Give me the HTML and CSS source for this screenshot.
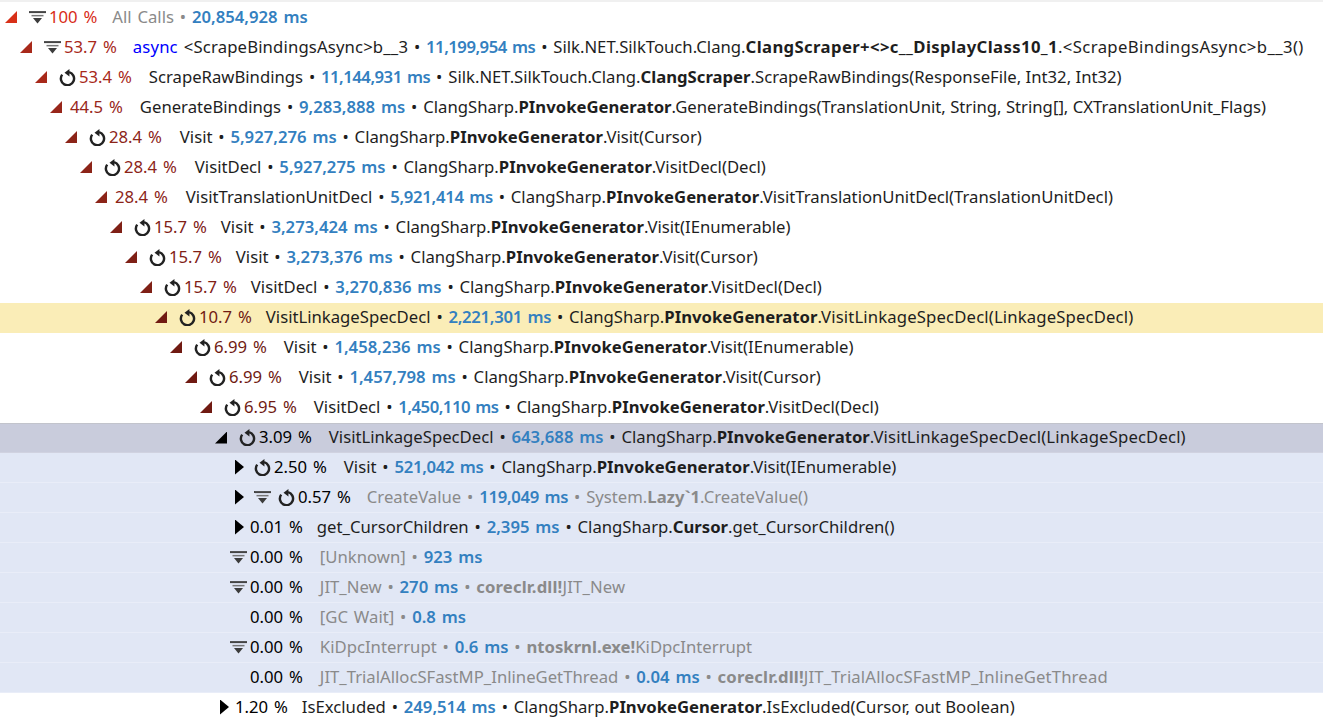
FILE: index.html
```html
<!DOCTYPE html>
<html lang="en">
<head>
<meta charset="utf-8">
<title>Call Tree</title>
<link rel="stylesheet" href="styles.css">
</head>
<body>
<svg class="defs" width="0" height="0">
<symbol id="filter" viewBox="0 0 17 14"><path d="M0 .6h17v2H0z" fill="#444"/><path d="M2.5 4.4h12v1.5h-12z" fill="#777"/><path d="M4 7.6h9L8.5 13z" fill="#3c3c3c"/></symbol>
<symbol id="rec" viewBox="0 0 16 16"><path d="M9.5 3A6.2 6.2 0 1 1 3 5.3" fill="none" stroke="#222" stroke-width="2.3"/><path d="M9.8 0v7L5.2 3.5z" fill="#222"/></symbol>
</svg>
<main class="tree">
<div class="row"><span class="cell l0"><span class="slot"><i class="tri open c100"></i></span><svg class="ic"><use href="#filter"/></svg><span class="pct g15 p100">100 %</span><span class="dim name">All Calls</span><span class="dim"> • </span><b class="ms">20,854,928 ms</b></span></div>
<div class="row"><span class="cell l1"><span class="slot"><i class="tri open c53"></i></span><svg class="ic"><use href="#filter"/></svg><span class="pct g16 p53">53.7 %</span><span class="name wide"><span class="kw">async</span> &lt;ScrapeBindingsAsync&gt;b__3</span> • <b class="ms ms2">11,199,954 ms</b> • <span class="sig">Silk.NET.SilkTouch.Clang.<span class="wider"><b>ClangScraper+&lt;&gt;c__DisplayClass10_1</b>.&lt;ScrapeBindingsAsync&gt;b__3()</span></span></span></div>
<div class="row"><span class="cell l2"><span class="slot"><i class="tri open c53"></i></span><svg class="ic"><use href="#rec"/></svg><span class="pct p53">53.4 %</span><span class="name">ScrapeRawBindings</span> • <b class="ms ms2">11,144,931 ms</b> • <span class="sig">Silk.NET.SilkTouch.Clang.<b>ClangScraper</b>.ScrapeRawBindings(ResponseFile, Int32, Int32)</span></span></div>
<div class="row"><span class="cell l3"><span class="slot"><i class="tri open c44"></i></span><span class="pct p44">44.5 %</span><span class="name">GenerateBindings</span> • <b class="ms">9,283,888 ms</b> • <span class="sig">ClangSharp.<b>PInvokeGenerator</b>.GenerateBindings(TranslationUnit, String, String[], CXTranslationUnit_Flags)</span></span></div>
<div class="row"><span class="cell l4"><span class="slot"><i class="tri open c28"></i></span><svg class="ic"><use href="#rec"/></svg><span class="pct g18 p28">28.4 %</span><span class="name">Visit</span> • <b class="ms">5,927,276 ms</b> • <span class="sig">ClangSharp.<b>PInvokeGenerator</b>.Visit(Cursor)</span></span></div>
<div class="row"><span class="cell l5"><span class="slot"><i class="tri open c28"></i></span><svg class="ic"><use href="#rec"/></svg><span class="pct g18 p28">28.4 %</span><span class="name">VisitDecl</span> • <b class="ms">5,927,275 ms</b> • <span class="sig">ClangSharp.<b>PInvokeGenerator</b>.VisitDecl(Decl)</span></span></div>
<div class="row"><span class="cell l6"><span class="slot"><i class="tri open c28"></i></span><span class="pct g18 p28">28.4 %</span><span class="name">VisitTranslationUnitDecl</span> • <b class="ms ms1">5,921,414 ms</b> • <span class="sig">ClangSharp.<b>PInvokeGenerator</b>.VisitTranslationUnitDecl(TranslationUnitDecl)</span></span></div>
<div class="row"><span class="cell l7"><span class="slot"><i class="tri open c15"></i></span><svg class="ic"><use href="#rec"/></svg><span class="pct g14 p15">15.7 %</span><span class="name">Visit</span> • <b class="ms">3,273,424 ms</b> • <span class="sig">ClangSharp.<b>PInvokeGenerator</b>.Visit(IEnumerable)</span></span></div>
<div class="row"><span class="cell l8"><span class="slot"><i class="tri open c15"></i></span><svg class="ic"><use href="#rec"/></svg><span class="pct g14 p15">15.7 %</span><span class="name">Visit</span> • <b class="ms">3,273,376 ms</b> • <span class="sig">ClangSharp.<b>PInvokeGenerator</b>.Visit(Cursor)</span></span></div>
<div class="row"><span class="cell l9"><span class="slot"><i class="tri open c15"></i></span><svg class="ic"><use href="#rec"/></svg><span class="pct g14 p15">15.7 %</span><span class="name">VisitDecl</span> • <b class="ms">3,270,836 ms</b> • <span class="sig">ClangSharp.<b>PInvokeGenerator</b>.VisitDecl(Decl)</span></span></div>
<div class="row hot"><span class="cell l10"><span class="slot"><i class="tri open c10"></i></span><svg class="ic"><use href="#rec"/></svg><span class="pct g14 p10">10.7 %</span><span class="name">VisitLinkageSpecDecl</span> • <b class="ms ms1">2,221,301 ms</b> • <span class="sig">ClangSharp.<b>PInvokeGenerator</b><span class="wide">.VisitLinkageSpecDecl(LinkageSpecDecl)</span></span></span></div>
<div class="row"><span class="cell l11"><span class="slot"><i class="tri open c10"></i></span><svg class="ic"><use href="#rec"/></svg><span class="pct p10">6.99 %</span><span class="name">Visit</span> • <b class="ms">1,458,236 ms</b> • <span class="sig">ClangSharp.<b>PInvokeGenerator</b>.Visit(IEnumerable)</span></span></div>
<div class="row"><span class="cell l12"><span class="slot"><i class="tri open c10"></i></span><svg class="ic"><use href="#rec"/></svg><span class="pct p10">6.99 %</span><span class="name">Visit</span> • <b class="ms">1,457,798 ms</b> • <span class="sig">ClangSharp.<b>PInvokeGenerator</b>.Visit(Cursor)</span></span></div>
<div class="row"><span class="cell l13"><span class="slot"><i class="tri open c10"></i></span><svg class="ic"><use href="#rec"/></svg><span class="pct p10">6.95 %</span><span class="name">VisitDecl</span> • <b class="ms ms2">1,450,110 ms</b> • <span class="sig">ClangSharp.<b>PInvokeGenerator</b>.VisitDecl(Decl)</span></span></div>
<div class="row sel"><span class="cell l14"><span class="slot"><i class="tri open c0"></i></span><svg class="ic"><use href="#rec"/></svg><span class="pct">3.09 %</span><span class="name">VisitLinkageSpecDecl</span> • <b class="ms">643,688 ms</b> • <span class="sig">ClangSharp.<b>PInvokeGenerator</b><span class="wide">.VisitLinkageSpecDecl(LinkageSpecDecl)</span></span></span></div>
<div class="row child"><span class="cell l15"><span class="slot"><i class="tri closed"></i></span><svg class="ic"><use href="#rec"/></svg><span class="pct">2.50 %</span><span class="name">Visit</span> • <b class="ms ms1">521,042 ms</b> • <span class="sig">ClangSharp.<b>PInvokeGenerator</b>.Visit(IEnumerable)</span></span></div>
<div class="row child"><span class="cell l15"><span class="slot"><i class="tri closed"></i></span><svg class="ic"><use href="#filter"/></svg><svg class="ic"><use href="#rec"/></svg><span class="pct g16">0.57 %</span><span class="dim name">CreateValue</span><span class="dim"> • </span><b class="ms ms1">119,049 ms</b><span class="dim"> • <span class="sig">System.<b>Lazy`1</b>.CreateValue()</span></span></span></div>
<div class="row child"><span class="cell l15"><span class="slot"><i class="tri closed"></i></span><span class="pct g14">0.01 %</span><span class="name">get_CursorChildren</span> • <b class="ms">2,395 ms</b> • <span class="sig">ClangSharp.<b>Cursor</b>.get_CursorChildren()</span></span></div>
<div class="row child"><span class="cell l15"><span class="slot"><svg class="ic leaf"><use href="#filter"/></svg></span><span class="pct">0.00 %</span><span class="dim name">[Unknown]</span><span class="dim"> • </span><b class="ms">923 ms</b></span></div>
<div class="row child"><span class="cell l15"><span class="slot"><svg class="ic leaf"><use href="#filter"/></svg></span><span class="pct">0.00 %</span><span class="dim name">JIT_New</span><span class="dim"> • </span><b class="ms">270 ms</b><span class="dim"> • <span class="sig wide"><b>coreclr.dll!</b>JIT_New</span></span></span></div>
<div class="row child"><span class="cell l15"><span class="slot"></span><span class="pct">0.00 %</span><span class="dim name">[GC Wait]</span><span class="dim"> • </span><b class="ms">0.8 ms</b></span></div>
<div class="row child"><span class="cell l15"><span class="slot"><svg class="ic leaf"><use href="#filter"/></svg></span><span class="pct">0.00 %</span><span class="dim name">KiDpcInterrupt</span><span class="dim"> • </span><b class="ms">0.6 ms</b><span class="dim"> • <span class="sig"><b>ntoskrnl.exe!</b>KiDpcInterrupt</span></span></span></div>
<div class="row child"><span class="cell l15"><span class="slot"></span><span class="pct">0.00 %</span><span class="dim name">JIT_TrialAllocSFastMP_InlineGetThread</span><span class="dim"> • </span><b class="ms">0.04 ms</b><span class="dim"> • <span class="sig wide"><b>coreclr.dll!</b>JIT_TrialAllocSFastMP_InlineGetThread</span></span></span></div>
<div class="row"><span class="cell l14"><span class="slot"><i class="tri closed"></i></span><span class="pct g14">1.20 %</span><span class="name">IsExcluded</span> • <b class="ms">249,514 ms</b> • <span class="sig">ClangSharp.<b>PInvokeGenerator</b>.IsExcluded(Cursor, out Boolean)</span></span></div>
</main>
</body>
</html>
```
FILE: styles.css
```css
html, body { margin: 0; height: 100%; overflow: hidden; background: #fff; }
body { font-family: "Noto Sans", "Open Sans", sans-serif; font-size: 16.7px; word-spacing: 1.5px; color: #1e1e1e; }
.defs { position: absolute; }
.tree { display: flex; flex-direction: column; padding-top: 1px; border-top: 2px solid #f0f0f0; }
.row { height: 30px; flex: none; display: flex; align-items: center; padding-bottom: 4px; white-space: pre; box-sizing: border-box; }
.cell { display: flex; align-items: center; white-space: pre; }
.cell b { font-weight: 700; }
.sig { word-spacing: 0; }
.wide { letter-spacing: 0.15px; }
.wider { letter-spacing: 0.38px; }
.hot { background: #faedb7; }
.sel { background: #c9ccdc; border-top: 1px solid #c2c4cc; border-bottom: 1px solid #d0d2e0; padding-bottom: 3px; }
.child { background: #e1e7f5; border-bottom: 1px solid #e9edf8; padding-bottom: 3px; }
.slot { width: 20px; height: 17px; flex: none; display: flex; align-items: center; margin-top: 2px; }
.tri { display: block; flex: none; }
.open { width: 12px; height: 12px; clip-path: polygon(100% 0, 100% 100%, 0 100%); }
.closed { width: 9px; height: 15px; margin-left: 5px; background: #000; clip-path: polygon(0 0, 100% 50%, 0 100%); }
.c100 { background: #d83018; }
.c53 { background: #a8291a; }
.c44 { background: #98261a; }
.c28 { background: #8c2418; }
.c15 { background: #7f2016; }
.c10 { background: #701a12; }
.c0 { background: #000; }
.ic { width: 17px; height: 17px; flex: none; margin: 2px 3px 0 4px; }
.slot .leaf { margin: 0; }
.pct { margin-right: 17px; color: #000; }
.g14 { margin-right: 14px; }
.g15 { margin-right: 15px; }
.g16 { margin-right: 16px; }
.g18 { margin-right: 18px; }
.p100 { color: #d82c18; }
.p53 { color: #a8291a; }
.p44 { color: #98261a; }
.p28 { color: #8c2418; }
.p15 { color: #7f2016; }
.p10 { color: #701a12; }
.kw { color: #0000ff; }
.dim { color: #8a8a8a; }
.cell .ms { color: #3380c0; font-weight: 600; }
.cell .ms1 { letter-spacing: -0.3px; }
.cell .ms2 { letter-spacing: -0.5px; }
.l0 { padding-left: 5px; }
.l1 { padding-left: 20px; }
.l2 { padding-left: 35px; }
.l3 { padding-left: 50px; }
.l4 { padding-left: 65px; }
.l5 { padding-left: 80px; }
.l6 { padding-left: 95px; }
.l7 { padding-left: 110px; }
.l8 { padding-left: 125px; }
.l9 { padding-left: 140px; }
.l10 { padding-left: 155px; }
.l11 { padding-left: 170px; }
.l12 { padding-left: 185px; }
.l13 { padding-left: 200px; }
.l14 { padding-left: 215px; }
.l15 { padding-left: 230px; }
```
